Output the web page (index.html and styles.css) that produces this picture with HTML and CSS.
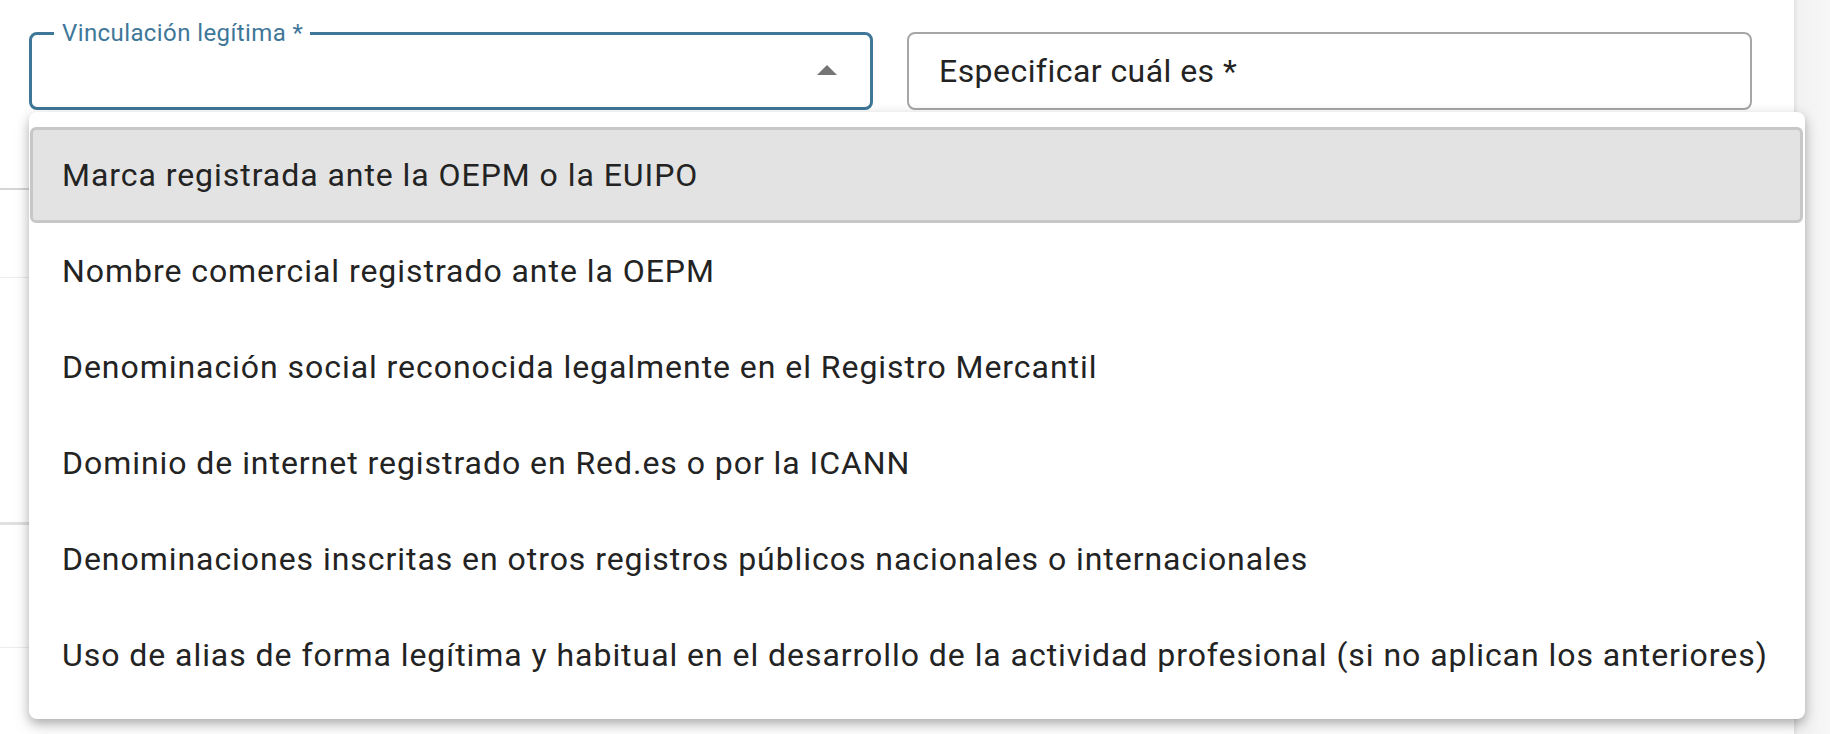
FILE: index.html
```html
<!DOCTYPE html>
<html lang="es">
<head>
	<meta charset="UTF-8">
	<title>Vinculación legítima</title>
	<link rel="stylesheet" href="styles.css">
</head>
<body>
	<div class="page">
		<main class="card">
			<div class="fields">
				<div class="field field-select is-focused">
					<span class="field-label">Vinculación legítima *</span>
					<svg class="field-arrow" viewBox="0 0 24 24" width="48" height="48"><path d="M7 14l5-5 5 5z"/></svg>
				</div>
				<div class="field field-text">
					<span class="field-placeholder">Especificar cuál es *</span>
				</div>
			</div>
			<div class="rows">
				<div class="row row-1"></div>
				<div class="row row-2"></div>
				<div class="row row-3"></div>
				<div class="row row-4"></div>
			</div>
			<ul class="menu">
				<li class="menu-item is-active">Marca registrada ante la OEPM o la EUIPO</li>
				<li class="menu-item">Nombre comercial registrado ante la OEPM</li>
				<li class="menu-item">Denominación social reconocida legalmente en el Registro Mercantil</li>
				<li class="menu-item">Dominio de internet registrado en Red.es o por la ICANN</li>
				<li class="menu-item">Denominaciones inscritas en otros registros públicos nacionales o internacionales</li>
				<li class="menu-item">Uso de alias de forma legítima y habitual en el desarrollo de la actividad profesional (si no aplican los anteriores)</li>
			</ul>
		</main>
		<aside class="side"></aside>
	</div>
</body>
</html>
```

FILE: styles.css
```css
html, body {
	margin: 0;
	height: 100%;
}
body {
	font-family: Roboto, "Noto Sans", sans-serif;
	color: #212121;
	background: #fff;
}
.page {
	display: flex;
	height: 734px;
	overflow: hidden;
}
.card {
	position: relative;
	width: 1794px;
	flex: none;
	background: #fff;
}
.side {
	flex: 1;
	background: linear-gradient(to right, #e4e4e4, #f2f2f2 5px, #f7f7f7);
}

/* form fields */
.fields {
	display: flex;
	gap: 34px;
	padding: 32px 0 0 29px;
}
.field {
	position: relative;
	box-sizing: border-box;
	height: 78px;
	border: 2px solid #a6a6a6;
	border-radius: 8px;
	display: flex;
	align-items: center;
}
.field-select {
	width: 844px;
}
.field-select.is-focused {
	border: 3px solid #3f7799;
}
.field-label {
	position: absolute;
	top: -16px;
	left: 22px;
	padding: 0 7px 0 8px;
	background: #fff;
	color: #3f7799;
	font-size: 24px;
	line-height: 28px;
	letter-spacing: 0.4px;
}
.field-arrow {
	position: absolute;
	right: 19px;
	top: calc(50% - 24px);
	fill: #757575;
}
.field-text {
	width: 845px;
}
.field-placeholder {
	padding-left: 30px;
	font-size: 32px;
	letter-spacing: 0.45px;
	color: #232323;
}

/* rows behind the menu */
.rows .row {
	box-sizing: border-box;
}
.row-1 {
	height: 80px;
	border-bottom: 2px solid #d6d6d6;
}
.row-2 {
	height: 88px;
	border-bottom: 1px solid #ececec;
}
.row-3 {
	height: 247px;
	border-bottom: 3px solid #e0e0e0;
}
.row-4 {
	height: 123px;
	border-bottom: 1px solid #ececec;
}

/* open menu */
.menu {
	position: absolute;
	z-index: 10;
	top: 112px;
	left: 29px;
	width: 1776px;
	margin: 0;
	padding: 15px 0 16px;
	list-style: none;
	background: #fff;
	border-radius: 8px;
	box-shadow: 0 5px 10px -2px rgba(0,0,0,0.2), 0 8px 16px 2px rgba(0,0,0,0.1), 0 2px 12px 2px rgba(0,0,0,0.08);
}
.menu-item {
	box-sizing: border-box;
	height: 96px;
	margin: 0 2px 0 1px;
	padding-left: 29px;
	display: flex;
	align-items: center;
	border: 3px solid transparent;
	border-radius: 6px;
	font-size: 32px;
	letter-spacing: 0.95px;
	color: #232323;
	white-space: nowrap;
}
.menu-item.is-active {
	background: #e3e3e3;
	border-color: #c7c7c7;
}
```
